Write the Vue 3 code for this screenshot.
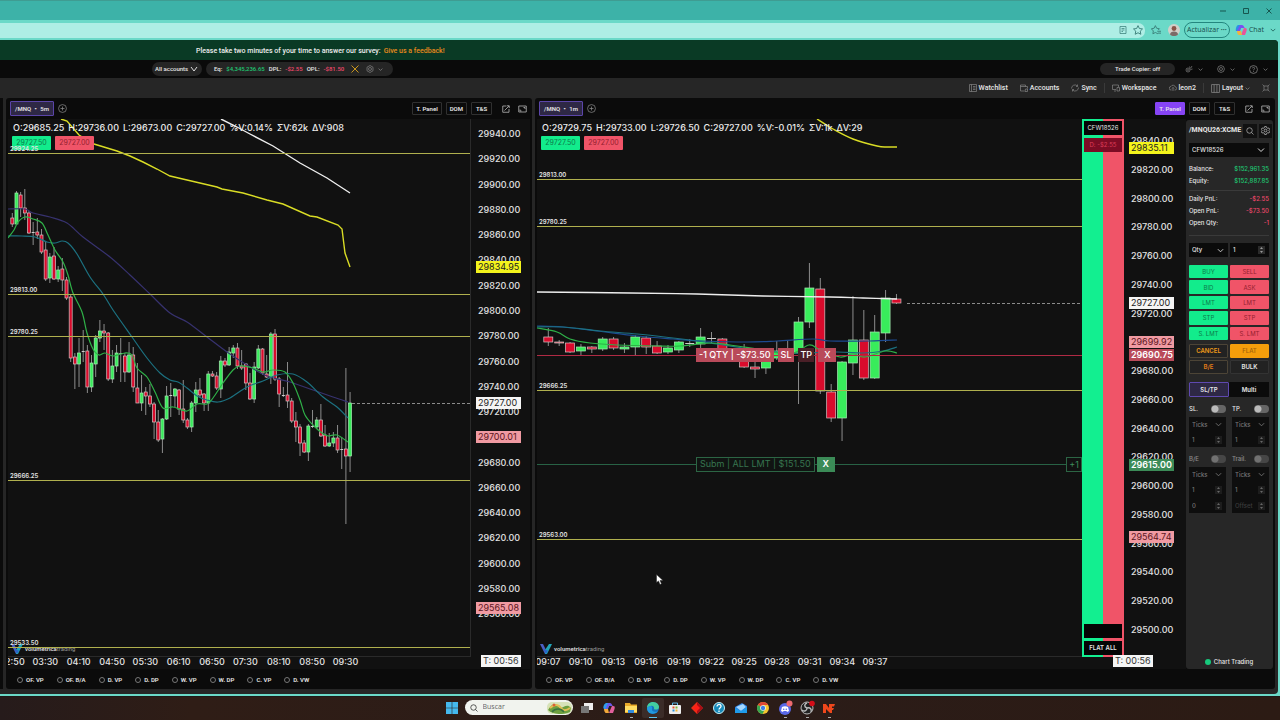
<script setup>
import { ref } from 'vue'

const CANDLES_5M = `213 218 224 227 r|191 193 224 225 g|192 195 208 217 r|189 208 213 220 r|211 213 233 234 r|222 232 233 245 d|218 232 235 239 r|229 235 252 254 r|242 250 279 281 r|253 257 278 283 g|247 256 279 280 r|266 270 279 282 g|258 269 280 291 r|277 280 298 300 r|294 297 358 362 r|353 357 364 389 r|338 353 364 387 g|330 351 352 362 d|345 351 387 393 r|355 363 387 392 g|335 338 364 377 g|320 331 338 342 g|324 331 333 350 r|332 333 379 381 r|350 366 379 383 g|345 353 366 372 g|338 353 354 382 d|353 356 372 382 r|342 355 372 373 g|347 355 387 392 r|363 388 403 403 r|375 393 403 411 g|387 392 396 415 r|384 396 404 407 r|402 404 422 439 r|410 422 440 442 r|418 419 439 453 g|386 396 419 420 g|383 395 396 417 d|388 389 396 407 g|389 390 409 415 r|380 409 420 423 r|418 420 427 429 r|401 403 427 432 g|382 390 403 412 g|378 390 395 398 r|393 394 403 411 r|371 374 403 411 g|371 374 376 377 r|372 376 388 390 r|356 361 389 398 g|358 361 365 367 r|347 352 365 366 g|345 348 353 358 g|343 348 366 369 r|350 366 368 370 r|363 364 383 390 r|373 383 399 400 r|362 367 399 403 g|345 349 368 369 g|348 349 373 375 r|355 374 377 378 r|332 334 377 384 g|329 334 379 381 r|377 379 394 407 r|387 395 396 397 d|362 395 401 408 r|398 401 421 423 r|412 421 427 442 r|424 427 443 456 r|440 443 452 453 r|424 426 452 461 g|410 426 427 428 d|417 420 427 429 g|404 420 436 437 r|425 435 446 447 r|433 443 446 447 g|432 438 443 447 g|425 438 450 453 r|437 449 450 469 d|368 449 456 524 r|392 403 456 472 g`
const CANDLES_1M = `328 337 342 346 r|340 342 343 346 r|342 343 352 353 r|344 347 351 356 g|346 347 349 353 r|337 339 349 351 g|337 339 348 350 r|343 347 349 353 g|335 337 347 355 g|336 338 347 354 r|341 346 353 354 r|345 348 352 354 g|341 342 350 353 g|339 343 344 347 d|328 337 344 348 g|332 338 339 343 d|338 339 352 354 r|348 352 357 359 r|344 354 367 368 r|360 367 369 378 r|355 358 368 374 g|341 351 358 360 g|341 352 358 360 g|317 322 353 404 g|263 288 322 328 g|278 289 391 394 r|384 392 418 422 r|361 362 418 441 g|296 340 363 375 g|310 340 378 380 r|315 332 378 379 g|290 298 333 342 g|294 299 303 304 r`

const parse = (text, x0, step) => text.split('|').map((row, i) => {
  const [hi, top, bottom, lo, kind] = row.split(' ')
  return { x: x0 + i * step, hi: +hi, top: +top, h: bottom - top, lo: +lo, kind }
})

// Catmull-Rom smoothing through the averaged points
const smooth = (text) => {
  const p = text.split(' ').map(s => s.split(',').map(Number))
  let d = `M${p[0]}`
  for (let i = 0; i < p.length - 1; i++) {
    const a = p[i - 1] || p[i], b = p[i], c = p[i + 1], e = p[i + 2] || c
    d += `C${b[0] + (c[0] - a[0]) / 6},${b[1] + (c[1] - a[1]) / 6} ${c[0] - (e[0] - b[0]) / 6},${c[1] - (e[1] - b[1]) / 6} ${c}`
  }
  return d
}
const straight = (text) => `M${text.split(' ').join('L')}`

const scale = (from, to, y0, perTick) => {
  const out = []
  for (let p = from, i = 0; p >= to; p -= 20, i++) out.push({ label: p.toFixed(2), y: y0 + i * perTick })
  return out
}

const studies = ['OF. VP', 'OF. B/A', 'D. VP', 'D. DP', 'W. VP', 'W. DP', 'C. VP', 'D. VW']

const charts = [
  {
    id: 'm5', tf: '5m', ox: -8, bw: 3, panelOn: false,
    info: ['O:29685.25', 'H:29736.00', 'L:29673.00', 'C:29727.00', '%V:0.14%', 'ΣV:62k', 'ΔV:908'],
    candles: parse(CANDLES_5M, 12.3, 4.17),
    lines: [
      { c: 'violet', d: smooth('8,209 25,209 33,213 50,217 67,223 83,237 110,257 130,275 150,294 170,313 187,322 207,337 227,352 247,365 267,376 290,382 313,390 333,397 348,402') },
      { c: 'teal', d: smooth('8,236 22,236 35,237 47,242 55,243 62,241 68,243 77,254 90,277 103,294 113,310 132,337 147,358 160,373 170,380 178,382 187,388 197,396 207,400 218,402 230,398 247,387 263,381 277,375 293,374 307,382 323,397 337,407 348,418') },
      { c: 'lime', d: smooth('8,238 14,230 18,222 25,217 33,219 42,223 48,235 55,250 63,262 68,275 73,293 82,312 87,333 93,349 99,355 105,353 113,356 125,353 132,355 137,368 147,377 155,392 163,408 173,407 187,411 197,404 207,404 213,398 223,383 233,370 240,366 253,368 263,372 273,370 285,372 293,383 300,400 305,415 313,425 322,433 328,436 337,435 348,442') },
      { c: 'yellow', d: straight('61,119 67,121 79,135 94,144 117,151 130,156 143,162 157,169 170,176 187,180 217,187 222,189 243,193 267,200 283,204 310,216 317,217 338,225 342,229 345,253 350,267') },
      { c: 'white', d: straight('221,119 237,127 250,134 273,146 300,163 327,178 350,193') }
    ],
    levels: [
      { label: '29924.25', y: 153 }, { label: '29813.00', y: 294 }, { label: '29780.25', y: 336 },
      { label: '29666.25', y: 480 }, { label: '29533.50', y: 647 }
    ],
    last: { from: 352, y: 403 },
    orders: [],
    ticks: scale(29940, 29560, 134, 25.28),
    tags: [
      { label: '29834.95', y: 267, c: 't-yellow' }, { label: '29727.00', y: 403, c: 't-white' },
      { label: '29700.01', y: 437, c: 't-pink' }, { label: '29565.08', y: 608, c: 't-pink' }
    ],
    times: ['02:50', '03:30', '04:10', '04:50', '05:30', '06:10', '06:50', '07:30', '08:10', '08:50', '09:30'].map((t, i) => ({ t, x: 4 + i * 33.35 }))
  },
  {
    id: 'm1', tf: '1m', ox: -537, bw: 9, panelOn: true,
    info: ['O:29729.75', 'H:29733.00', 'L:29726.50', 'C:29727.00', '%V:-0.01%', 'ΣV:1k', 'ΔV:29'],
    candles: parse(CANDLES_1M, 548.3, 10.88),
    lines: [
      { c: 'blue', d: smooth('537,326 563,327 597,331 637,336 673,339 703,341 747,342 777,341 813,339 830,341 870,341 897,340') },
      { c: 'teal', d: smooth('537,327 563,327 600,331 637,334 673,338 697,341 717,344 743,348 790,353 837,352 863,353 883,351 897,347') },
      { c: 'lime', d: smooth('537,328 557,332 570,339 590,343 617,345 657,346 680,346 710,343 730,345 757,349 790,354 809,345 820,350 840,357 853,354 865,357 885,351 897,353') },
      { c: 'yellow', d: smooth('817,119 833,129 853,139 877,146 887,147 897,147') },
      { c: 'white', d: smooth('537,292 630,293 697,294 763,296 830,297 863,298 897,299') }
    ],
    levels: [
      { label: '29813.00', y: 179 }, { label: '29780.25', y: 226 }, { label: '29666.25', y: 390 }, { label: '29563.00', y: 539 }
    ],
    last: { from: 907, y: 303 },
    orders: [{ y: 355, c: 'o-red' }, { y: 464, c: 'o-green' }],
    ticks: scale(29840, 29500, 141, 28.76),
    tags: [
      { label: '29835.11', y: 148, c: 't-yellow' }, { label: '29727.00', y: 303, c: 't-white' },
      { label: '29699.92', y: 342, c: 't-pink' }, { label: '29690.75', y: 355, c: 't-red' },
      { label: '29615.00', y: 465, c: 't-green' }, { label: '29564.74', y: 537, c: 't-pink' }
    ],
    times: ['09:07', '09:10', '09:13', '09:16', '09:19', '09:22', '09:25', '09:28', '09:31', '09:34', '09:37'].map((t, i) => ({ t, x: 11 + i * 32.7 }))
  }
]

const orderButtons = ['BUY', 'SELL', 'BID', 'ASK', 'LMT', 'LMT', 'STP', 'STP', 'S. LMT', 'S. LMT']
const account = ref('CFW18526')
const qty = ref(1)
</script>

<template>
  <div class="desktop">
    <header class="titlebar">
      <button aria-label="Minimize"><svg width="8" height="8" viewBox="0 0 8 8"><path d="M1 4h6" /></svg></button>
      <button aria-label="Maximize"><svg width="8" height="8" viewBox="0 0 8 8"><path d="M1.500 1.500h5v5h-5z" /></svg></button>
      <button aria-label="Close"><svg width="8" height="8" viewBox="0 0 8 8"><path d="M1.500 1.500l5 5m0-5l-5 5" /></svg></button>
    </header>
    <div class="addressbar">
      <div class="url">
        <svg width="8" height="8" viewBox="0 0 16 16"><path d="M2 1h12v14H2zM5 5h6M5 8h6M5 11h3" /></svg>
        <svg width="10" height="10" viewBox="0 0 16 16"><path d="M8 1l2.200 4.600 5 .7-3.600 3.500.9 5L8 12.400l-4.500 2.400.9-5L.8 6.300l5-.7z" /></svg>
      </div>
      <svg class="fav" width="10" height="10" viewBox="0 0 16 16"><path d="M11 14l-4-2-4 2 .7-4.500L.5 6l4.500-.8L7 1l2 4.200 4.500.8-2 2M10 10h6M11 13h5" /></svg>
      <svg class="avatar" width="12" height="12" viewBox="0 0 12 12"><circle cx="6" cy="6" r="6" fill="#d3cfc9" /><circle cx="6" cy="4.500" r="2.400" fill="#8a5548" /><path d="M2 10.500c0-4 8-4 8 0-2 2-6 2-8 0" fill="#7b6a68" /></svg>
      <button class="update">Actualizar <b>···</b></button>
      <svg class="cop" width="12" height="12" viewBox="0 0 12 12"><path d="M3 1h4l-2 6H1c-1-2 1-6 2-6" fill="#2b8fe8" /><path d="M7 1c2 0 2 3 3 3H6l-2 4-2-1 3-6z" fill="#7a4ff0" /><path d="M9 4h1c2 0 2 1 1.500 3L10 11H6l2-5z" fill="#e8559a" /><path d="M2 7h4l1 4H4c-1 0-2-2-2-4" fill="#f2b33d" /></svg>
      <button class="chat">Chat</button>
      <svg class="chev dark" width="6" height="6" viewBox="0 0 8 8"><path d="M1 2.500l3 3 3-3" /></svg>
    </div>

    <div class="app">
      <div class="banner">Please take two minutes of your time to answer our survey: <a href="#">Give us a feedback!</a></div>

      <div class="accounts">
        <button class="pill all">All accounts <svg class="chev" width="8" height="8" viewBox="0 0 8 8"><path d="M1 2l3 4 3-4" /></svg></button>
        <div class="pill eq">
          <span>Eq:</span><em class="up">$4,345,236.65</em><span>DPL:</span><em class="dn">-$2.55</em><span>OPL:</span><em class="dn">-$81.50</em>
          <svg class="x" width="8" height="8" viewBox="0 0 8 8"><path d="M.5.5l7 7m0-7l-7 7" /></svg>
          <svg class="ico" width="8" height="8" viewBox="0 0 16 16"><path d="M8 1l6 3.500v7L8 15l-6-3.500v-7z" /><circle cx="8" cy="8" r="3" /></svg>
          <svg class="chev dim" width="5" height="5" viewBox="0 0 8 8"><path d="M1 2.500l3 3 3-3" /></svg>
        </div>
        <div class="right">
          <button class="pill copier">Trade Copier: off</button>
          <button class="mini" aria-label="Alerts"><svg class="ico" width="8" height="8" viewBox="0 0 16 16"><circle cx="6" cy="10" r="4" /><circle cx="6" cy="10" r="1" /><path d="M9 3l1 3M14 2l-3 5M15 8l-4 1" /></svg><svg class="chev dim" width="5" height="5" viewBox="0 0 8 8"><path d="M1 2.500l3 3 3-3" /></svg></button>
          <button class="mini" aria-label="Settings"><svg class="ico" width="8" height="8" viewBox="0 0 16 16"><path d="M6 2l2-1 2 1 3 1 1 3 1 2-1 2-1 3-3 1-2 1-2-1-3-1-1-3-1-2 1-2 1-3z" /><circle cx="8" cy="8" r="3" /></svg><svg class="chev dim" width="5" height="5" viewBox="0 0 8 8"><path d="M1 2.500l3 3 3-3" /></svg></button>
          <button class="mini" aria-label="Help"><svg class="ico" width="9" height="9" viewBox="0 0 16 16"><circle cx="8" cy="8" r="7" /><path d="M6 6c0-3 4.500-2 4 0 0 1.500-2 1.500-2 3.500M8 11v1.500" /></svg><svg class="chev dim" width="5" height="5" viewBox="0 0 8 8"><path d="M1 2.500l3 3 3-3" /></svg></button>
        </div>
      </div>

      <nav class="toolbar">
        <button><svg class="ico" width="8" height="8" viewBox="0 0 16 16"><path d="M1 1h14v14H1zM5 1v14M8 5h5M8 8h5M8 11h5" /></svg>Watchlist</button>
        <button><svg class="ico" width="8" height="8" viewBox="0 0 16 16"><path d="M1 2h10v3M1 2v12h8M1 5h14v4M11 10h4v5h-5z" /></svg>Accounts</button>
        <button><svg class="ico" width="8" height="8" viewBox="0 0 16 16"><path d="M1 9a7 7 0 0 1 12-5M15 7a7 7 0 0 1-12 5M13 1v4h-3M3 15v-4h3" /></svg>Sync</button>
        <i></i>
        <button><svg class="ico" width="8" height="8" viewBox="0 0 16 16"><path d="M1 2h12v4M1 2v9h7M10 7h5v7h-5zM4 14h4" /></svg>Workspace</button>
        <button><svg class="ico" width="8" height="8" viewBox="0 0 16 16"><path d="M5 12H4a3.500 3.500 0 0 1 0-7 4.500 4.500 0 0 1 8.500 1A3 3 0 0 1 12 12h-1M8 14V7M6 9l2-2 2 2" /></svg>leon2</button>
        <i></i>
        <button><svg class="ico" width="9" height="9" viewBox="0 0 16 16"><path d="M1 1h14v14H1zM5.500 1v14M10.500 1v14" /></svg>Layout <svg class="chev dim" width="5" height="5" viewBox="0 0 8 8"><path d="M1 2.500l3 3 3-3" /></svg></button>
        <button aria-label="Fullscreen"><svg class="ico" width="8" height="8" viewBox="0 0 16 16"><path d="M4 4h8v8H4zM1 1l3 3M15 1l-3 3M1 15l3-3M15 15l-3-3" /></svg></button>
      </nav>

      <main class="workspace">
        <div class="stub"></div>
        <section v-for="c in charts" :key="c.id" class="panel" :class="c.id">
          <div class="phead">
            <button class="sym">/MNQ <b>•</b> {{ c.tf }}</button>
            <button class="plus" aria-label="Add"><svg class="ico" width="9" height="9" viewBox="0 0 16 16"><circle cx="8" cy="8" r="7" /><path d="M8 4.500v7M4.500 8h7" /></svg></button>
            <div class="pbtns">
              <button class="pb" :class="{ on: c.panelOn }">T. Panel</button>
              <button class="pb">DOM</button>
              <button class="pb">T&amp;S</button>
              <button class="ib first" aria-label="Pop out"><svg width="8" height="8" viewBox="0 0 16 16"><path d="M9 2H1.500v12.500H14V8M5 11l9-9M10 1.500h4.500V6" /></svg></button>
              <button class="ib" aria-label="Maximize"><svg width="9" height="8" viewBox="0 0 18 16"><path d="M1.500 2h15v12h-15zM11 5h3v3M4 9v3h3" /></svg></button>
            </div>
          </div>
          <div class="pbody">
            <div class="chart">
              <div class="plot">
                <svg class="canvas" width="100%" height="100%">
                  <g :transform="`translate(${c.ox},-119)`">
                    <g v-for="(k, i) in c.candles" :key="i" :class="['k', k.kind]">
                      <line :x1="k.x" :x2="k.x" :y1="k.hi" :y2="k.lo" />
                      <rect :x="k.x - c.bw / 2" :y="k.top" :width="c.bw" :height="k.h" />
                    </g>
                    <path v-for="(l, i) in c.lines" :key="i" :class="['ma', l.c]" :d="l.d" />
                    <line class="last" :x1="c.last.from" :x2="2400" :y1="c.last.y + .5" :y2="c.last.y + .5" />
                  </g>
                </svg>
                <div class="info"><span v-for="t in c.info" :key="t">{{ t }}</span></div>
                <div class="quotes"><button class="bid">29727.50</button><button class="ask">29727.00</button></div>
                <div class="brand">
                  <svg width="12" height="10" viewBox="0 0 12 10"><path d="M0 0h3l3 6-1 4z" fill="#4b5fc4" /><path d="M12 0H9L5 6v4h2z" fill="#20a5b8" /><path d="M3.500 5L6 10l2-3.500L5.500 6z" fill="#2a62c8" /></svg>
                  <span><b>volumetrica</b>trading</span>
                </div>
                <svg class="canvas over" width="100%" height="100%">
                  <g transform="translate(0,-119)">
                    <g v-for="l in c.levels" :key="l.label">
                      <rect class="lv" x="0" :y="l.y" width="100%" height="1" />
                      <text class="lvt" x="2" :y="l.y - 2">{{ l.label }}</text>
                    </g>
                    <rect v-for="o in c.orders" :key="o.y" :class="o.c" x="0" :y="o.y" width="100%" height="1" />
                  </g>
                </svg>
                <template v-if="c.id === 'm1'">
                  <div class="pos">
                    <span>-1 QTY | -$73.50</span><button>SL</button><button class="tp">TP</button><button class="wide">X</button>
                  </div>
                  <div class="sub"><span>Subm | ALL LMT | $151.50</span><button>X</button></div>
                  <span class="plus1">+1</span>
                  <svg class="cursor" width="8" height="11" viewBox="0 0 8 11"><path d="M.5.5v8l2-1.600L4 10.500l1.500-.7L4 6.500h3z" fill="#fff" stroke="#222" stroke-width=".5" /></svg>
                </template>
              </div>
              <svg class="times" width="100%" height="12"><text v-for="t in c.times" :key="t.t" :x="t.x" y="8">{{ t.t }}</text></svg>
            </div>
            <div v-if="c.id === 'm1'" class="ladder">
              <div class="cells">
                <span class="acc">CFW18526</span>
                <span class="day">D: -$2.55</span>
                <span class="blank"></span>
                <button>FLAT ALL</button>
              </div>
            </div>
            <div class="axis">
              <svg width="100%" height="100%">
                <g transform="translate(0,-119)">
                  <text v-for="t in c.ticks" :key="t.label" class="tick" x="7" :y="t.y + 3">{{ t.label }}</text>
                  <g v-for="t in c.tags" :key="t.label" :class="t.c">
                    <rect x="5" :y="t.y - 6" width="45" height="12" />
                    <text x="7" :y="t.y + 3">{{ t.label }}</text>
                  </g>
                </g>
              </svg>
              <span class="timer">T: 00:56</span>
            </div>
            <aside v-if="c.id === 'm1'" class="trade">
              <div class="thead"><strong>/MNQU26:XCME</strong>
                <button aria-label="Search"><svg width="8" height="8" viewBox="0 0 16 16"><circle cx="7" cy="7" r="5.500" /><path d="M11 11l4 4" /></svg></button>
                <button aria-label="Panel settings"><svg width="9" height="9" viewBox="0 0 16 16"><path d="M6.500 1h3l.5 2 2 1 2-.5 1.500 2.500L14 8l1.500 2-1.500 2.500-2-.5-2 1-.5 2h-3L6 13l-2-1-2 .5L.5 10 2 8 .5 6 2 3.500 4 4l2-1z" /><circle cx="8" cy="8" r="2.500" /></svg></button>
              </div>
              <label class="sel full"><select v-model="account" aria-label="Account"><option>CFW18526</option></select><svg class="chev" width="8" height="8" viewBox="0 0 8 8"><path d="M1 2.500l3 3 3-3" /></svg></label>
              <dl>
                <div><dt>Balance:</dt><dd class="up">$152,961.35</dd></div>
                <div><dt>Equity:</dt><dd class="up">$152,887.85</dd></div>
              </dl>
              <dl class="pnl">
                <div><dt>Daily PnL:</dt><dd class="dn">-$2.55</dd></div>
                <div><dt>Open PnL:</dt><dd class="dn">-$73.50</dd></div>
                <div><dt>Open Qty:</dt><dd class="dn">-1</dd></div>
              </dl>
              <div class="two qty">
                <label class="sel"><select aria-label="Quantity type"><option>Qty</option></select><svg class="chev" width="7" height="7" viewBox="0 0 8 8"><path d="M1 2.500l3 3 3-3" /></svg></label>
                <label class="num"><input v-model="qty" aria-label="Quantity" type="text"><svg width="7" height="8" viewBox="0 0 7 8"><path d="M2 3l1.500-2L5 3zM2 5l1.500 2L5 5z" /></svg></label>
              </div>
              <div class="orders"><button v-for="(b, i) in orderButtons" :key="i" :class="i % 2 ? 'sell' : 'buy'">{{ b }}</button></div>
              <div class="acts"><button class="cancel">CANCEL</button><button class="flat">FLAT</button><button class="be">B/E</button><button class="bulk">BULK</button></div>
              <div class="tabs"><button class="on">SL/TP</button><button>Multi</button></div>
              <div class="two tg"><label>SL. <input type="checkbox"></label><label>TP. <input type="checkbox"></label></div>
              <div class="two boxes">
                <div v-for="n in 2" :key="n" class="box">
                  <label class="sel"><select aria-label="Unit"><option>Ticks</option></select><svg class="chev" width="7" height="7" viewBox="0 0 8 8"><path d="M1 2.500l3 3 3-3" /></svg></label>
                  <label class="num"><input aria-label="Ticks" type="text" value="1"><svg width="7" height="8" viewBox="0 0 7 8"><path d="M2 3l1.500-2L5 3zM2 5l1.500 2L5 5z" /></svg></label>
                </div>
              </div>
              <div class="two tg off"><label>B/E <input type="checkbox"></label><label>Trail. <input type="checkbox"></label></div>
              <div class="two boxes">
                <div v-for="n in 2" :key="n" class="box">
                  <label class="sel"><select aria-label="Unit"><option>Ticks</option></select><svg class="chev" width="7" height="7" viewBox="0 0 8 8"><path d="M1 2.500l3 3 3-3" /></svg></label>
                  <label class="num"><input aria-label="Ticks" type="text" value="1"><svg width="7" height="8" viewBox="0 0 7 8"><path d="M2 3l1.500-2L5 3zM2 5l1.500 2L5 5z" /></svg></label>
                  <label class="num"><input aria-label="Offset" type="text" placeholder="Offset" :value="n === 1 ? '0' : ''"><svg width="7" height="8" viewBox="0 0 7 8"><path d="M2 3l1.500-2L5 3zM2 5l1.500 2L5 5z" /></svg></label>
                </div>
              </div>
              <footer><b></b>Chart Trading</footer>
            </aside>
          </div>
          <div class="studies"><label v-for="s in studies" :key="s"><input type="radio" :name="c.id + s">{{ s }}</label></div>
        </section>
      </main>
    </div>

    <footer class="taskbar">
      <button aria-label="Start"><svg width="12" height="12" viewBox="0 0 12 12"><path d="M0 0h5.700v5.700H0zM6.300 0H12v5.700H6.300zM0 6.300h5.700V12H0zM6.300 6.300H12V12H6.300z" fill="#45b9ee" /></svg></button>
      <label class="search">
        <svg width="8" height="8" viewBox="0 0 16 16"><circle cx="7" cy="7" r="5.500" /><path d="M11 11l4 4" /></svg>
        <input type="text" placeholder="Buscar" aria-label="Buscar">
        <svg class="art" width="25" height="12" viewBox="0 0 25 12"><rect width="25" height="12" rx="5" fill="#d7e2b8" /><path d="M1 8c4-7 8-7 11-3s7-5 12 1l-1 4c-6 3-17 3-22-2" fill="#6d9f3e" /><path d="M3 6c5-5 9-3 11 0s5 3 9 0" fill="none" stroke="#e2bd54" stroke-width="2" /><path d="M5 10c3-4 9-4 12 0" fill="none" stroke="#38713f" stroke-width="1.500" /><circle cx="7" cy="3" r="1.500" fill="#d85f36" /></svg>
      </label>
      <div class="icons">
        <button aria-label="Task view"><svg width="14" height="14" viewBox="0 0 14 14"><path d="M4 2h9v7H4z" fill="#eee" /><path d="M1 5h8v7H1z" fill="#777" /></svg></button>
        <button aria-label="Copilot"><svg width="14" height="14" viewBox="0 0 14 14"><path d="M4 2h4L6 8H2C0 6 3 2 4 2" fill="#2e9be8" /><path d="M8 2c2 0 2 3 3 3H7L5 9H3l3-7z" fill="#6d57e8" /><path d="M10 5h1c2 0 2 1 1.500 3L11 12H7l2-5z" fill="#e2609c" /><path d="M2 8h4l1 4H4c-1 0-2-2-2-4" fill="#f3a83a" /></svg></button>
        <button aria-label="Files" class="run"><svg width="14" height="14" viewBox="0 0 14 14"><path d="M1 2h5l1 1.500h6V12H1z" fill="#eaa929" /><path d="M1 5h12v6H1z" fill="#ffdc64" /><path d="M4 9h6v3H4z" fill="#328be0" /></svg></button>
        <button aria-label="Edge" class="run act"><svg width="14" height="14" viewBox="0 0 14 14"><circle cx="7" cy="7" r="6" fill="#1671bd" /><path d="M1 7C1 3 4 1 7 1c4 0 6 3 6 5 0 3-4 3-5 2 1-3-3-5-7-1" fill="#43cda0" /><path d="M1 7c4-4 6-1 5 1-.5 2 2 4 6 2-3 4-11 4-11-3" fill="#219ae0" /></svg></button>
        <button aria-label="Store"><svg width="14" height="14" viewBox="0 0 14 14"><path d="M4.500 4V2h5v2" fill="none" stroke="#58b5e6" /><rect x="1" y="4" width="12" height="9" rx="1" fill="#eee" /><path d="M4.500 5.500h2v2h-2z" fill="#e5502e" /><path d="M7.500 5.500h2v2h-2z" fill="#7fb93b" /><path d="M4.500 8.500h2v2h-2z" fill="#2992df" /><path d="M7.500 8.500h2v2h-2z" fill="#f2b632" /></svg></button>
        <button aria-label="Remote"><svg width="14" height="14" viewBox="0 0 14 14"><path d="M7 1l6 6-6 6-6-6z" fill="#f02b16" /><path d="M7 1l6 6-6 6z" fill="#a90e16" /><path d="M7 4l3 3-3 3-3-3z" fill="#ff1d18" /></svg></button>
        <button aria-label="Help"><svg width="14" height="14" viewBox="0 0 14 14"><circle cx="7" cy="7" r="5.500" fill="#1689b9" stroke="#c6edf5" /><path d="M5 5.500c0-3 4.500-2.500 4 0 0 1-2 1.500-2 3M7 9.500V11" fill="none" stroke="#fff" stroke-width="1.300" /></svg></button>
        <button aria-label="Mail"><svg width="14" height="14" viewBox="0 0 14 14"><path d="M1 6l7-4 5 3v7H1z" fill="#2c7ee0" /><path d="M2 6l7-3 3 3-5 4z" fill="#a4d8ff" /><path d="M1 7l6 3 6-4v6H1z" fill="#1f9bea" /></svg></button>
        <button aria-label="Chrome"><svg width="14" height="14" viewBox="0 0 14 14"><circle cx="7" cy="7" r="6" fill="#f5c42e" /><path d="M7 7L1.800 4A6 6 0 0 1 12.200 4H7z" fill="#df4635" /><path d="M7 7L1.800 4A6 6 0 0 0 6.500 13L9 8z" fill="#37a551" /><circle cx="7" cy="7" r="2.800" fill="#fff" /><circle cx="7" cy="7" r="2.200" fill="#3f7fe8" /></svg></button>
        <button aria-label="Discord" class="run"><svg width="16" height="16" viewBox="0 0 16 16"><circle cx="8" cy="9" r="6" fill="#5968e8" /><path d="M5 7c2-1 4-1 6 0l1 4-2 1-.5-1h-3L6 12l-2-1z" fill="#fff" /><circle cx="6.700" cy="9.300" r=".8" fill="#5968e8" /><circle cx="9.300" cy="9.300" r=".8" fill="#5968e8" /><circle cx="12.500" cy="3.500" r="3" fill="#ed6a70" /></svg></button>
        <button aria-label="OBS" class="run"><svg width="16" height="16" viewBox="0 0 16 16"><circle cx="8" cy="8" r="6" fill="#222" stroke="#bbb" /><path d="M8 8c-3-1-3-4 0-5M8 8c3-1 5 1 4 4M8 8c0 3-3 4-5 2" fill="none" stroke="#bbb" stroke-width="1.400" /><circle cx="13" cy="3.500" r="2.800" fill="#d60d18" /></svg></button>
        <button aria-label="Trader" class="run"><svg width="14" height="14" viewBox="0 0 14 14"><path d="M1 3h3l3 4V3h6l-1 2.500h-2V7h2l-1 2h-1v3H8L4 8v4H1z" fill="#ef471c" /></svg></button>
      </div>
    </footer>
  </div>
</template>

<style>
html, body { margin: 0; background: #2a1c18; }
</style>

<style scoped>
* { box-sizing: border-box; }
button, input, select { font: inherit; color: inherit; background: none; border: 0; padding: 0; margin: 0; appearance: none; border-radius: 0; outline: 0; }
svg { flex: none; display: block; }
a { text-decoration: none; }
.desktop { height: 100vh; min-height: 720px; display: flex; flex-direction: column; font-family: Inter, "Liberation Sans", sans-serif; font-size: 7px; color: #e6e6e6; background: #6bd9c8; overflow: hidden; line-height: 1.2; }
.titlebar { height: 20px; background: #3db2a8; border-top: 1px solid #3f9c92; display: flex; justify-content: flex-end; gap: 15px; padding-right: 7px; align-items: center; flex: none; }
.titlebar svg, .addressbar svg path { fill: none; stroke: #17564f; stroke-width: 1; }
.addressbar { height: 20px; display: flex; align-items: center; flex: none; color: #174c48; font-family: "Open Sans", "Noto Sans", sans-serif; padding-right: 4px; }
.addressbar .avatar path, .addressbar .cop path { stroke: none; fill: revert-layer; }
.url { flex: 1; height: 15px; background: #aeeee5; border-radius: 0 7px 7px 0; display: flex; justify-content: flex-end; align-items: center; gap: 6px; padding-right: 2px; }
.addressbar .url svg path, .addressbar .fav path { stroke: #3b7f79; stroke-width: 1.5; }
.fav { margin-left: 6px; }
.avatar { margin-left: 7px; }
.update { border: 1px solid #23877f; border-radius: 8px; height: 16px; width: 46px; margin: 0 5px 0 4px; white-space: nowrap; }
.chat { margin: 0 6px 0 2px; }
.chev path { fill: none; stroke: #ddd; stroke-width: 1; }
.dim path { stroke: #999; }
.app { flex: 1; min-height: 0; display: flex; flex-direction: column; background: #262626; margin: 0 2px 2px 0; border-radius: 0 4px 4px 0; overflow: hidden; }
.banner, .accounts, .toolbar, .phead, .studies { font-family: Roboto, "Liberation Sans", sans-serif; }
.banner { height: 20px; background: #0a3a25; font-weight: 500; display: flex; align-items: center; padding: 2px 0 0 196px; gap: 3px; color: #eee; white-space: nowrap; flex: none; }
.banner a { color: #e88a1c; }
.accounts { height: 18px; background: #0a0a0a; display: flex; align-items: center; gap: 4px; padding: 0 10px 0 152px; font-size: 6px; font-weight: 500; flex: none; }
.pill { background: #252525; border-radius: 7px; height: 14px; display: flex; align-items: center; white-space: nowrap; }
.all { width: 50px; justify-content: space-between; padding: 0 4px 0 3px; }
.eq { width: 187px; padding: 0 8px; gap: 4px; }
em { font-style: normal; }
.up { color: #1fc773; }
.dn { color: #f0486c; }
.x { margin-left: 3px; fill: none; stroke: #c9961c; }
.ico { fill: none; stroke: #8c8c8c; stroke-width: 1.3; }
.eq .ico { margin-left: 3px; }
.right { margin-left: auto; display: flex; gap: 14px; align-items: center; }
.copier { width: 75px; height: 12px; justify-content: center; margin-right: -4px; }
.mini { display: flex; align-items: center; gap: 5px; }
.toolbar { height: 20px; display: flex; justify-content: flex-end; align-items: center; gap: 12px; padding-right: 8px; font-weight: 500; flex: none; }
.toolbar button { display: flex; align-items: center; gap: 2px; }
.toolbar i { width: 1px; height: 10px; background: #3a3a3a; margin: 0 -5px; }
.workspace { flex: 1; min-height: 0; display: flex; gap: 3px; padding: 0 3px 5px 0; }
.stub { width: 3px; background: #0b0b0b; flex: none; }
.panel { display: flex; flex-direction: column; background: #0b0b0b; border-radius: 3px; min-width: 0; padding: 0 2px; }
.m5 { flex: 522 1 0; }
.m1 { flex: 736 1 0; }
.phead { height: 21px; display: flex; align-items: center; gap: 4px; padding: 0 3px 0 2px; font-size: 6px; font-weight: 600; flex: none; }
.sym { width: 44px; height: 15px; border: 1px solid #5b45a8; background: #2e2845; border-radius: 1px; white-space: nowrap; }
.sym b { margin: 0 2px; }
.pbtns { margin-left: auto; display: flex; align-items: center; gap: 4px; }
.pb { border: 1px solid #303030; height: 13px; padding: 0 3px; min-width: 21px; border-radius: 1px; white-space: nowrap; }
.pb.on { background: #8644f4; border-color: #8644f4; }
.ib { margin-left: 4px; }
.first { margin-left: 6px; }
.ib svg { fill: none; stroke: #b5b5b5; stroke-width: 1.6; }
.pbody { flex: 1; min-height: 0; display: flex; }
.chart { flex: 1; min-width: 0; display: flex; flex-direction: column; background: #111; overflow: hidden; }
.plot { position: relative; flex: 1; min-height: 0; overflow: hidden; border-bottom: 1px solid #2a2a2a; border-right: 1px solid #2a2a2a; }
.m1 .plot { border-right: 0; }
.canvas { position: absolute; inset: 0; }
.over { pointer-events: none; }
.k line { stroke: #8d8d8d; stroke-width: 1; }
.k rect { stroke: #d7c5c5; stroke-width: .7; }
.r rect { fill: #d90b2c; }
.g rect { fill: #38ec5b; stroke: #a9eab4; }
.d rect { fill: #ccc; stroke: none; }
.ma { fill: none; stroke-width: 1.2; }
.violet { stroke: #37326f; }
.teal { stroke: #1c7180; }
.blue { stroke: #1d4a90; }
.lime { stroke: #2fb048; }
.yellow { stroke: #d9dc25; stroke-width: 1.4; }
.white { stroke: #eee; stroke-width: 1.4; }
.last { stroke: #8c8c8c; stroke-dasharray: 3 2; }
.lv { fill: #b0b04e; }
.lvt { fill: #e4e4e4; font-size: 6px; font-weight: 600; }
.o-red { fill: #b02a44; }
.o-green { fill: #286245; }
.info { position: absolute; top: 4px; left: 5px; display: flex; gap: 4px; font-size: 9px; font-weight: 500; white-space: nowrap; color: #ececec; }
.quotes { position: absolute; top: 17px; left: 4px; display: flex; gap: 4px; }
.quotes button { width: 39px; height: 14px; border-radius: 1px; color: #0d7a4a; background: #12ec8c; }
.quotes .ask { background: #f05468; color: #94202f; }
.brand { position: absolute; bottom: 2px; left: 3px; display: flex; align-items: center; gap: 2px; font-family: Roboto, "Liberation Sans", sans-serif; font-size: 6px; color: #999; }
.brand b { color: #ddd; font-weight: 600; }
.pos { position: absolute; top: 229px; left: 159px; display: flex; gap: 4px; height: 14px; font-size: 9px; font-weight: 500; color: #fff; align-items: stretch; white-space: nowrap; }
.pos > * { background: #b94a5a; padding: 0 3px; display: flex; align-items: center; }
.pos .tp { background: #4a1f27; padding: 0 2px; }
.pos .wide { padding: 0 6px; }
.sub { position: absolute; top: 338px; left: 159px; display: flex; gap: 2px; height: 15px; font-size: 9px; color: #37754f; white-space: nowrap; }
.sub span { border: 1px solid #2c6544; background: #101412; padding: 0 3px; display: flex; align-items: center; }
.sub button { background: #3b8b57; color: #fff; width: 18px; font-weight: 600; }
.plus1 { position: absolute; right: 0; top: 338px; height: 15px; width: 16px; border: 1px solid #2c6544; background: #111; color: #3e8c5c; font-size: 9px; text-align: center; line-height: 13px; }
.cursor { position: absolute; left: 119px; top: 455px; }
.times { flex: none; fill: #e4e4e4; font-size: 9px; font-weight: 500; text-anchor: middle; overflow: visible; }
.ladder { width: 42px; flex: none; background: #111; padding-bottom: 12px; }
.cells { height: 100%; background: linear-gradient(90deg, #12ef90 50%, #f05468 50%); padding: 2px; display: flex; flex-direction: column; gap: 3px; font-size: 6px; text-align: center; }
.cells > * { background: #050505; height: 14px; line-height: 14px; }
.cells .day { background: #7c0c24; color: #dc3c58; }
.cells .blank { margin-top: auto; }
.cells button { font-weight: 600; }
.axis { width: 59px; flex: none; position: relative; background: #111; font-size: 9px; }
.m1 .axis { width: 62px; }
.tick { fill: #e2e2e2; font-weight: 500; }
.t-yellow rect { fill: #f4f41c; } .t-yellow text { fill: #222; }
.t-white rect { fill: #f5f5f5; } .t-white text { fill: #222; }
.t-pink rect { fill: #f09aa2; } .t-pink text { fill: #5c141c; }
.t-red rect { fill: #b94a5a; } .t-red text { fill: #fff; font-weight: 600; }
.t-green rect { fill: #3b8b57; } .t-green text { fill: #fff; font-weight: 600; }
.timer { position: absolute; bottom: 2px; left: 10px; background: #f5f5f5; color: #333; height: 12px; line-height: 12px; padding: 0 2px; white-space: nowrap; }
.m1 .timer { left: -11px; }
.studies { height: 20px; display: flex; align-items: center; gap: 13px; padding: 2px 0 0 9px; font-size: 6px; font-weight: 600; flex: none; white-space: nowrap; }
.studies label { display: flex; align-items: center; gap: 3px; }
.studies input { width: 6px; height: 6px; border: 1px solid #777; border-radius: 50%; }
.trade { width: 87px; flex: none; margin-top: 1px; padding: 3px 4px 1px 3px; border-radius: 3px; background: #272727; display: flex; flex-direction: column; font-size: 6px; font-weight: 500; }
.thead { display: flex; align-items: center; gap: 2px; height: 15px; margin: 0 -3px 5px 0; }
.thead strong { flex: 1; font-family: Roboto, "Liberation Sans", sans-serif; font-size: 7px; font-weight: 700; }
.thead button { width: 14px; height: 14px; background: #111; display: grid; place-items: center; }
.thead svg { fill: none; stroke: #bbb; stroke-width: 1.4; }
.sel, .num { display: flex; align-items: center; background: #0b0b0b; height: 14px; padding: 0 4px 0 3px; min-width: 0; }
.sel select, .num input { flex: 1; min-width: 0; width: 0; }
.num svg { background: #2b2b2b; }
.num path { fill: #999; }
dl { margin: 0; border-bottom: 1px solid #3a3a3a; padding: 6px 0 3px; }
.pnl { padding: 2px 0 6px; }
dl div { display: flex; justify-content: space-between; height: 12px; line-height: 12px; }
dd { margin: 0; }
.two { display: grid; grid-template-columns: 1fr 1fr; gap: 2px; }
.qty { margin: 7px 0 8px; }
.orders, .acts { display: grid; grid-template-columns: 1fr 1fr; gap: 2px; }
.orders { height: 75px; grid-auto-rows: 1fr; }
.orders button { border-radius: 1px; font-weight: 400; }
.buy { background: #12ec8c; color: #0d7a4a; }
.sell { background: #f05468; color: #94202f; }
.acts { margin-top: 4px; grid-auto-rows: 14px; }
.acts button { border: 1px solid #4c4436; border-radius: 1px; font-weight: 600; background: #222; }
.acts .cancel { color: #f09a18; }
.acts .flat { background: #f59e0b; color: #a3620a; border-color: #f59e0b; font-weight: 500; }
.acts .be { color: #e27c18; }
.acts .bulk { border-color: #333; }
.tabs { display: grid; grid-template-columns: 1fr 1fr; height: 15px; margin-top: 8px; background: #0b0b0b; font-weight: 600; }
.tabs .on { border: 1px solid #5f49b0; background: #2e2845; border-radius: 1px; }
.tg { gap: 6px; height: 16px; margin-top: 4px; align-items: center; }
.tg label { display: flex; justify-content: space-between; align-items: center; }
.tg input { flex: none; width: 15px; height: 8px; border-radius: 4px; background: radial-gradient(circle at 4px 4px, #bbb 3px, #666 4px); }
.off { opacity: .5; }
.boxes { gap: 6px; color: #777; }
.box { background: #0e0e0e; }
.box .sel, .box .num { height: 16px; background: none; }
.box .chev path { stroke: #777; }
.box .num path { fill: #666; }
.box .num svg { background: #1d1d1d; }
.box input::placeholder { color: #3c3c3c; opacity: 1; }
.box .sel, .box .num:last-child { height: 15px; }
.trade footer { margin-top: auto; display: flex; align-items: center; justify-content: center; gap: 3px; height: 12px; }
.trade footer b { width: 6px; height: 6px; border-radius: 50%; background: #17c97c; }
.taskbar { height: 24px; flex: none; background: linear-gradient(90deg, #261b1b, #2f1d16 15%, #2b1c18 60%, #2c1b14); display: flex; align-items: center; justify-content: center; gap: 7px; border-top: 1px solid #1d1a18; padding: 0 0 2px 5px; }
.search { width: 108px; height: 15px; background: #f1f3ee; border-radius: 8px; display: flex; align-items: center; padding: 0 1px 0 5px; gap: 5px; color: #444; font-family: "Open Sans", "Noto Sans", sans-serif; }
.search > svg:first-child { fill: none; stroke: #333; stroke-width: 1.6; }
.search input { flex: 1; min-width: 0; }
.search input::placeholder { color: #666; opacity: 1; }
.icons { display: flex; margin-left: -4px; }
.icons button { width: 22px; height: 20px; display: grid; place-items: center; position: relative; }
.run::after { content: ""; position: absolute; bottom: 0; left: 10px; width: 3px; height: 1px; background: #aaa; }
.act { background: #3b2c28; border-radius: 2px; }
.act::after { background: #5cc4f0; left: 7px; width: 8px; }
</style>
